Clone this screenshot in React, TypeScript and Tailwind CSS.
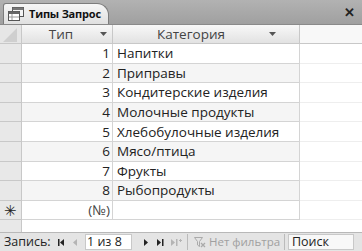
import React from "react";

const ROWS: [string, string][] = [
  ["1", "Напитки"],
  ["2", "Приправы"],
  ["3", "Кондитерские изделия"],
  ["4", "Молочные продукты"],
  ["5", "Хлебобулочные изделия"],
  ["6", "Мясо/птица"],
  ["7", "Фрукты"],
  ["8", "Рыбопродукты"],
];

function DropArrow() {
  return (
    <svg width="7" height="4" viewBox="0 0 7 4" className="shrink-0">
      <path d="M0 0h7L3.5 4z" fill="#555" />
    </svg>
  );
}

function TableIcon() {
  return (
    <svg width="16" height="14" viewBox="0 0 16 14" className="shrink-0">
      <rect x="4.5" y="0.5" width="11" height="9" fill="#f4f4f4" stroke="#555" />
      <rect x="4.5" y="0.5" width="11" height="2.5" fill="#777" />
      <rect x="0.5" y="4.5" width="11" height="9" fill="#fff" stroke="#555" />
      <rect x="0.5" y="4.5" width="11" height="2.5" fill="#666" />
      <path d="M1 10h10M4 7v6" stroke="#999" />
    </svg>
  );
}

// record navigator glyphs
function NavIcon({ kind, dim }: { kind: "first" | "prev" | "next" | "last" | "new"; dim?: boolean }) {
  const c = dim ? "#b4b4b4" : "#222";
  return (
    <svg width="14" height="9" viewBox="0 0 14 9" className="shrink-0">
      {kind === "first" && (
        <>
          <rect x="4" y="1" width="1.5" height="7" fill={c} />
          <path d="M10 1v7L6 4.5z" fill={c} />
        </>
      )}
      {kind === "prev" && <path d="M9 1v7L5 4.5z" fill={c} />}
      {kind === "next" && <path d="M5 1v7l4-3.5z" fill={c} />}
      {kind === "last" && (
        <>
          <path d="M3 1v7l4-3.5z" fill={c} />
          <rect x="8" y="1" width="1.5" height="7" fill={c} />
        </>
      )}
      {kind === "new" && (
        <>
          <path d="M2 1v7l4-3.5z" fill={c} />
          <rect x="7" y="1" width="1.5" height="7" fill={c} />
          <path d="M10 2.5h3M11.5 1v3" stroke={c} strokeWidth="1" />
        </>
      )}
    </svg>
  );
}

export default function App() {
  return (
    <div
      className="w-[362px] h-[251px] flex flex-col bg-white overflow-hidden text-[13.5px] text-[#222]"
      style={{ fontFamily: '"Open Sans", "Liberation Sans", sans-serif' }}
    >
      {/* document tab strip */}
      <div className="h-[25px] shrink-0 flex items-end justify-between bg-gradient-to-b from-[#b2b2b2] to-[#a0a0a0] border-b border-[#8a8a8a] pl-[3px] pr-[7px]">
        <div className="h-[21px] w-[106px] shrink-0 flex items-center gap-[5px] pl-[4px] bg-gradient-to-b from-[#f6f6f6] to-[#e0e0e0] border border-b-0 border-[#7c7c7c] rounded-tl-[3px] rounded-tr-[12px]">
          <TableIcon />
          <span className="font-bold text-[11px] text-[#111] whitespace-nowrap tracking-[-0.2px]">Типы Запрос</span>
        </div>
        <span className="self-center text-[13px] font-bold text-[#222] leading-none">✕</span>
      </div>

      {/* grid */}
      <div className="flex-1 flex flex-col">
        <div className="h-[19px] flex border-b border-[#c8c8c8]">
          <div className="w-[22px] shrink-0 relative bg-[#e6e6e6] border-r border-[#c8c8c8]">
            <svg width="14" height="14" viewBox="0 0 14 14" className="absolute left-[3px] top-[3px]">
              <path d="M14 0V14H0z" fill="#cfcfcf" />
            </svg>
          </div>
          <div className="w-[91px] shrink-0 flex items-center bg-gradient-to-b from-[#f8f8f8] to-[#e2e2e2] border-r border-[#c8c8c8] pr-[5px]">
            <span className="flex-1 text-center text-[#444]">Тип</span>
            <DropArrow />
          </div>
          <div className="w-[187px] shrink-0 flex items-center bg-gradient-to-b from-[#f8f8f8] to-[#e2e2e2] border-r border-[#c8c8c8] pr-[23px]">
            <span className="flex-1 text-center text-[#444]">Категория</span>
            <DropArrow />
          </div>
          <div className="flex-1 bg-[#f8f8f8]" />
        </div>

        {ROWS.map(([id, name], i) => (
          <div key={id} className="h-[19.6px] flex">
            <div className="w-[22px] shrink-0 bg-[#e8e8e8] border-r border-b border-[#c8c8c8]" />
            <div className={`w-[91px] shrink-0 flex items-center justify-end pr-[2px] border-r border-b border-[#d4d4d4] ${i % 2 === 1 ? "bg-[#f5f5f5]" : "bg-white"}`}>
              {id}
            </div>
            <div className={`w-[187px] shrink-0 flex items-center pl-[4px] border-r border-b border-[#d4d4d4] whitespace-nowrap ${i % 2 === 1 ? "bg-[#f5f5f5]" : "bg-white"}`}>
              {name}
            </div>
            <div className="flex-1 border-b border-[#eeeeee]" />
          </div>
        ))}

        <div className="h-[19.6px] flex">
          <div className="w-[22px] shrink-0 flex items-center justify-center bg-[#e8e8e8] border-r border-b border-[#c8c8c8] text-[15px] leading-none">✳</div>
          <div className="w-[91px] shrink-0 flex items-center justify-end pr-[2px] border-r border-b border-[#d4d4d4] text-[#444]">(№)</div>
          <div className="w-[187px] shrink-0 border-r border-b border-[#d4d4d4]" />
          <div className="flex-1 border-b border-[#eeeeee]" />
        </div>
        <div className="flex-1 flex">
          <div className="w-[22px] shrink-0 bg-[#e8e8e8] border-r border-[#c8c8c8]" />
          <div className="flex-1" />
        </div>
      </div>

      {/* record navigation */}
      <div className="h-[19px] shrink-0 flex items-center bg-[#e4e4e4] border-t border-[#b8b8b8] text-[12.5px] pl-[4px]">
        <span className="text-[#222] w-[50px]">Запись:</span>
        <NavIcon kind="first" />
        <NavIcon kind="prev" dim />
        <div className="w-[47px] h-[16px] shrink-0 bg-white border border-[#c8c8c8] flex items-center pl-[1px] ml-[3px]">1 из 8</div>
        <div className="ml-[7px] flex gap-[1px] shrink-0">
          <NavIcon kind="next" />
          <NavIcon kind="last" />
          <NavIcon kind="new" dim />
        </div>
        <div className="w-px h-[16px] bg-[#bbb] ml-[4px] mr-[6px] shrink-0" />
        <span className="text-[#a0a0a0] text-[11.5px] flex items-center gap-[3px] w-[90px] shrink-0 whitespace-nowrap">
          <svg width="12" height="11" viewBox="0 0 12 11" className="shrink-0">
            <path d="M0.5 0.5h8l-3 4v5l-2-1.5V4.5z" fill="none" stroke="#aaa" />
            <path d="M7 6l4 4M11 6l-4 4" stroke="#aaa" strokeWidth="1.3" />
          </svg>
          Нет фильтра
        </span>
        <div className="w-px h-[16px] bg-[#bbb] mr-[3px] shrink-0" />
        <div className="w-[66px] h-[16px] shrink-0 bg-[#f8f8f8] border border-[#c8c8c8] flex items-center pl-[3px] text-[#222]">Поиск</div>
      </div>
    </div>
  );
}
